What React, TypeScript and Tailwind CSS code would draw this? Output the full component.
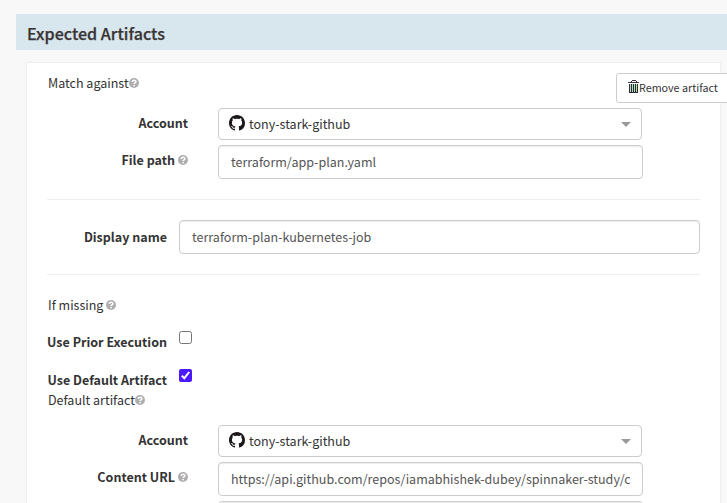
import type { ReactNode } from "react";

function Help({ className = "" }: { className?: string }) {
  return (
    <svg viewBox="0 0 10 10" className={`inline-block size-[10px] shrink-0 ${className}`}>
      <circle cx="5" cy="5" r="5" fill="#b0adae" />
      <path d="M3.2 4C3.2 1.8 6.9 1.8 6.9 3.8C6.9 5 5.1 4.9 5.1 6.1" fill="none" stroke="#fff" strokeWidth="1.5" />
      <rect x="4.3" y="6.9" width="1.6" height="1.4" fill="#fff" />
    </svg>
  );
}

function GitHub() {
  return (
    <svg viewBox="0 0 16 16" className="relative -top-px size-4 shrink-0" fill="#1b1817">
      <path d="M8 0C3.58 0 0 3.58 0 8c0 3.54 2.29 6.53 5.47 7.59.4.07.55-.17.55-.38 0-.19-.01-.82-.01-1.49-2.01.37-2.53-.49-2.69-.94-.09-.23-.48-.94-.82-1.13-.28-.15-.68-.52-.01-.53.63-.01 1.08.58 1.23.82.72 1.21 1.87.87 2.33.66.07-.52.28-.87.51-1.07-1.78-.2-3.64-.89-3.64-3.95 0-.87.31-1.59.82-2.15-.08-.2-.36-1.02.08-2.12 0 0 .67-.21 2.2.82.64-.18 1.32-.27 2-.27s1.36.09 2 .27c1.53-1.04 2.2-.82 2.2-.82.44 1.1.16 1.92.08 2.12.51.56.82 1.27.82 2.15 0 3.07-1.87 3.75-3.65 3.95.29.25.54.73.54 1.48 0 1.07-.01 1.93-.01 2.2 0 .21.15.46.55.38A8.01 8.01 0 0 0 16 8c0-4.42-3.58-8-8-8z" />
    </svg>
  );
}

function Trash() {
  return (
    <svg viewBox="0 0 11 13" className="mb-[3px] h-[13px] w-[11px] shrink-0" shapeRendering="crispEdges">
      <path d="M4 0h4v1H4zM3 1h1v1H3zM8 1h1v1H8zM0 2h11v1H0z" fill="#3b2f3d" />
      <path d="M1 4h9v9H1z" fill="#33283b" />
      <path d="M2 4h1v8H2zM4 4h1v8H4zM6 4h1v8H6zM8 4h1v8H8z" fill="#a6e3ae" />
    </svg>
  );
}

function Row({ label, help, children }: { label: string; help?: boolean; children: ReactNode }) {
  return (
    <div className="flex">
      <div className="flex h-[30px] w-[141px] shrink-0 items-center justify-end gap-[3px] font-bold">
        <span>{label}</span>
        {help && <Help />}
      </div>
      <div className="ml-[30px]">{children}</div>
    </div>
  );
}

function AccountSelect() {
  return (
    <div className="flex h-8 w-[424px] items-center rounded-[4px] border border-[#ccc] bg-white pr-[10px] pl-[10px]">
      <GitHub />
      <span className="ml-1 flex-1">tony-stark-github</span>
      <svg viewBox="0 0 10 5" className="h-[5px] w-[10px]" fill="#999">
        <path d="M0 0h10L5 5z" />
      </svg>
    </div>
  );
}

function Field({ value, className }: { value: string; className: string }) {
  return (
    <div className={`flex h-[34px] items-center rounded-[4px] border border-[#ccc] bg-white px-3 text-[#555] shadow-[inset_0_1px_1px_rgba(0,0,0,0.075)] ${className}`}>
      <span>{value}</span>
    </div>
  );
}

function Check({ checked }: { checked?: boolean }) {
  return checked ? (
    <svg viewBox="0 0 13 13" className="ml-3 size-[13px]">
      <rect width="13" height="13" rx="2" fill="#4b19ff" />
      <path d="M2.8 6.8L5.3 9.2L10.2 3" fill="none" stroke="#fff" strokeWidth="2" />
    </svg>
  ) : (
    <span className="ml-3 size-[13px] rounded-[2.5px] border border-[#767676] bg-white" />
  );
}

export default function App() {
  return (
    <div className="h-[503px] w-[727px] overflow-hidden bg-[#f8f8f8] pt-[14px] pl-4 font-['Noto_Sans_CJK_SC',sans-serif] text-[12.53px] leading-5 whitespace-nowrap text-[#333]">
      <header className="flex h-9 items-center bg-[#d7e7ed] pt-[2px] pl-[11px] text-[16.1px] font-medium text-[#3a3435] [-webkit-text-stroke:0.25px_#3a3435]">
        Expected Artifacts
      </header>
      <main className="mt-3 ml-[10px] h-[460px] w-[695px] border border-[#eee] bg-white px-5 pt-[10px]">
        <div className="flex h-[35px] justify-between">
          <div className="flex h-5 items-center pl-px">
            Match against
            <Help />
          </div>
          <button className="-mr-10 flex h-[30px] w-[124px] items-center rounded-[3px] border border-[#ccc] bg-white pl-[11px] text-[10.74px]">
            <Trash />
            <span>Remove artifact</span>
          </button>
        </div>
        <Row label="Account">
          <AccountSelect />
        </Row>
        <div className="mt-[5px]">
          <Row label="File path" help>
            <Field value="terraform/app-plan.yaml" className="w-[425px]" />
          </Row>
        </div>
        <div className="mt-5 border-t border-[#eee]" />
        <div className="mt-5 flex items-center">
          <div className="w-[120px] text-right font-bold">Display name</div>
          <Field value="terraform-plan-kubernetes-job" className="ml-3 w-[521px]" />
        </div>
        <div className="mt-5 border-t border-[#eee]" />
        <div className="mt-5 flex h-5 items-center gap-[3px] pl-px">
          If missing
          <Help />
        </div>
        <div className="mt-4 flex h-[22px]">
          <div className="w-[120px] pt-px text-right font-bold">Use Prior Execution</div>
          <Check />
        </div>
        <div className="mt-4 flex h-[21px]">
          <div className="w-[120px] pt-px text-right font-bold">Use Default Artifact</div>
          <Check checked />
        </div>
        <div className="mb-[15px] flex h-5 items-center pl-px">
          Default artifact
          <Help />
        </div>
        <Row label="Account">
          <AccountSelect />
        </Row>
        <div className="mt-[5px]">
          <Row label="Content URL" help>
            <Field value="https://api.github.com/repos/iamabhishek-dubey/spinnaker-study/c" className="w-[425px]" />
            <Field value="" className="mt-[5px] w-[425px]" />
          </Row>
        </div>
      </main>
    </div>
  );
}
